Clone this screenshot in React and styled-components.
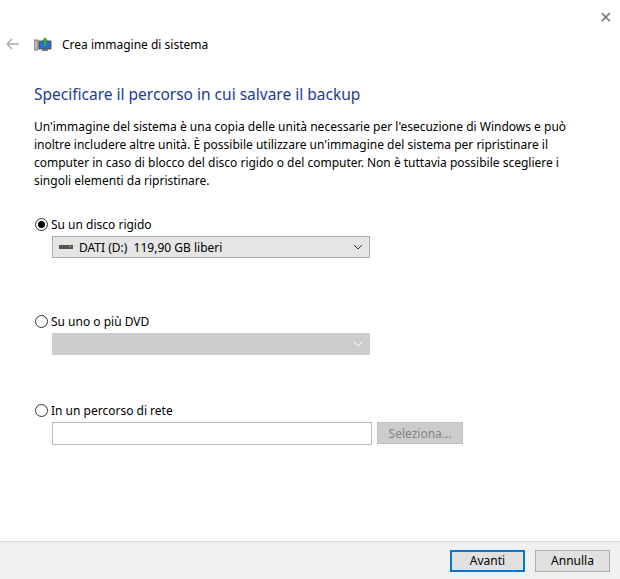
import React from 'react';
import styled, { createGlobalStyle } from 'styled-components';

const Global = createGlobalStyle`
  html, body { margin: 0; background: #fff; }
  body { font-family: "Segoe UI", "Noto Sans", "Liberation Sans", sans-serif; font-size: 12px; color: #000; }
`;

const Window = styled.div`
  width: 620px; height: 579px; display: flex; flex-direction: column; position: relative;
`;
const Close = styled.div`
  position: absolute; right: 8px; top: 6px; font-size: 16px; color: #777;
`;
const Header = styled.div`
  display: flex; align-items: center; gap: 10px; padding: 34px 0 0 6px; height: 20px;
`;
const Body = styled.div`
  flex: 1; padding: 0 30px 0 34px;
`;
const Title = styled.h1`
  font-size: 15.5px; font-weight: normal; color: #1d3b96; margin: 29px 0 13px;
`;
const Para = styled.p`
  margin: 0 0 25px; line-height: 18px; width: 560px;
`;
const Option = styled.div`
  display: flex; flex-direction: column; gap: 3px; margin-bottom: ${p => p.$gap}px;
`;
const RadioLabel = styled.label`
  display: flex; align-items: center; gap: 3px; height: 18px;
`;
const Radio = styled.span`
  width: 11px; height: 11px; border: 1px solid #333; border-radius: 50%;
  display: flex; align-items: center; justify-content: center; margin-left: 1px;
  &::after { content: ''; width: 7px; height: 7px; border-radius: 50%; background: ${p => p.$on ? '#000' : 'transparent'}; }
`;
const Row = styled.div`
  display: flex; gap: 5px; margin-left: 18px;
`;
const Combo = styled.div`
  width: 318px; height: 22px; box-sizing: border-box; border: 1px solid ${p => p.$disabled ? '#ccc' : '#adadad'};
  background: ${p => p.$disabled ? '#ccc' : '#e5e5e5'}; display: flex; align-items: center; padding: 0 6px;
  gap: 6px;
`;
const Grow = styled.span` flex: 1; `;
const Input = styled.div`
  width: 320px; height: 23px; box-sizing: border-box; border: 1px solid #bcbcbc; background: #fff;
`;
const Btn = styled.div`
  width: ${p => p.$w}px; height: 22px; box-sizing: border-box; display: flex; align-items: center; justify-content: center;
  border: ${p => p.$primary ? '2px solid #0078d7' : '1px solid #adadad'};
  background: ${p => p.$disabled ? '#ccc' : '#e1e1e1'}; color: ${p => p.$disabled ? '#838383' : '#000'};
  ${p => p.$disabled && 'border-color: #bfbfbf;'}
`;
const Footer = styled.div`
  height: 37px; border-top: 1px solid #dfdfdf; background: #f0f0f0; display: flex; justify-content: flex-end;
  align-items: center; gap: 10px; padding: 0 10px 0 0;
`;

const Chevron = ({ color }) => (
  <svg width="10" height="6" viewBox="0 0 10 6"><path d="M1 1l4 4 4-4" fill="none" stroke={color} strokeWidth="1" /></svg>
);

export default function App() {
  return (
    <Window>
      <Global />
      <Close>✕</Close>
      <Header>
        <svg width="14" height="12" viewBox="0 0 14 12"><path d="M1 6h12M1 6l5-5M1 6l5 5" fill="none" stroke="#a8a8a8" strokeWidth="1.3" /></svg>
        <svg width="18" height="16" viewBox="0 0 18 16" style={{ marginLeft: 4 }}>
          <rect x="0" y="4" width="4" height="10" fill="#bbb" stroke="#666" strokeWidth="0.8" />
          <rect x="5" y="5" width="12" height="8" fill="#2b6fc4" stroke="#444" strokeWidth="0.8" />
          <rect x="8" y="13" width="6" height="2" fill="#777" />
          <path d="M11 1l-3 4h2v5h2V5h2z" fill="#3aa84a" />
        </svg>
        <span>Crea immagine di sistema</span>
      </Header>
      <Body>
        <Title>Specificare il percorso in cui salvare il backup</Title>
        <Para>Un'immagine del sistema è una copia delle unità necessarie per l'esecuzione di Windows e può inoltre includere altre unità. È possibile utilizzare un'immagine del sistema per ripristinare il computer in caso di blocco del disco rigido o del computer. Non è tuttavia possibile scegliere i singoli elementi da ripristinare.</Para>
        <Option $gap={54}>
          <RadioLabel><Radio $on />Su un disco rigido</RadioLabel>
          <Row>
            <Combo>
              <svg width="14" height="6"><rect x="0" y="1" width="14" height="4" fill="#555" /><rect x="10" y="2" width="2" height="1" fill="#6c6" /></svg>
              <Grow>DATI (D:)&nbsp; 119,90 GB liberi</Grow>
              <Chevron color="#333" />
            </Combo>
          </Row>
        </Option>
        <Option $gap={46}>
          <RadioLabel><Radio />Su uno o più DVD</RadioLabel>
          <Row>
            <Combo $disabled><Grow /><Chevron color="#fff" /></Combo>
          </Row>
        </Option>
        <Option $gap={0}>
          <RadioLabel><Radio />In un percorso di rete</RadioLabel>
          <Row>
            <Input />
            <Btn $w={86} $disabled>Seleziona...</Btn>
          </Row>
        </Option>
      </Body>
      <Footer>
        <Btn $w={75} $primary>Avanti</Btn>
        <Btn $w={75}>Annulla</Btn>
      </Footer>
    </Window>
  );
}
